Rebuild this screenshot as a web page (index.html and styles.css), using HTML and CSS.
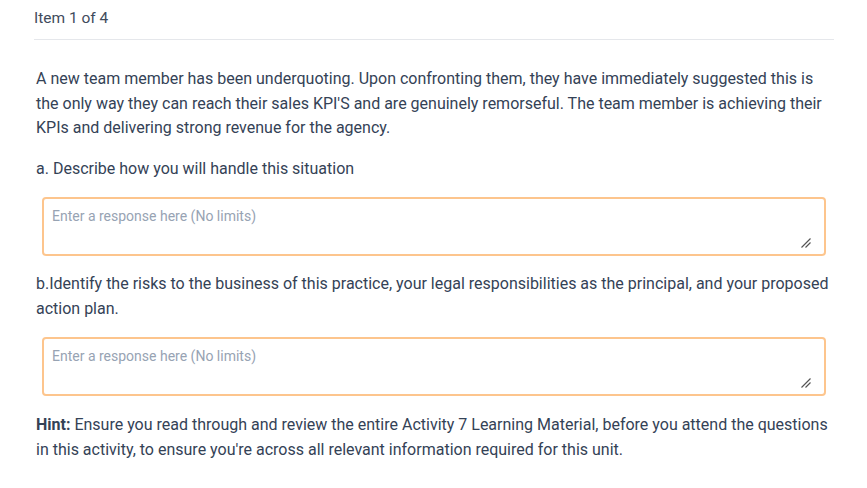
FILE: index.html
```html
<!DOCTYPE html>
<html>
<head>
<meta charset="utf-8">
<link rel="stylesheet" href="styles.css">
</head>
<body>
<div class="page">
  <div class="header">Item 1 of 4</div>
  <div class="content">
    <p class="para">A new team member has been underquoting. Upon confronting them, they have immediately suggested this is the only way they can reach their sales KPI'S and are genuinely remorseful. The team member is achieving their KPIs and delivering strong revenue for the agency.</p>
    <p class="label">a. Describe how you will handle this situation</p>
    <div class="field">
      <div class="box">
        <textarea class="response" placeholder="Enter a response here (No limits)"></textarea>
        <svg class="grip" width="10" height="10" viewBox="0 0 10 10"><path d="M9.5 0.5 L0.5 9.5 M9.5 4.5 L4.5 9.5" stroke="#555" stroke-width="1.2" fill="none"/></svg>
      </div>
    </div>
    <p class="label">b.Identify the risks to the business of this practice, your legal responsibilities as the principal, and your proposed action plan.</p>
    <div class="field">
      <div class="box">
        <textarea class="response" placeholder="Enter a response here (No limits)"></textarea>
        <svg class="grip" width="10" height="10" viewBox="0 0 10 10"><path d="M9.5 0.5 L0.5 9.5 M9.5 4.5 L4.5 9.5" stroke="#555" stroke-width="1.2" fill="none"/></svg>
      </div>
    </div>
    <p class="hint"><strong>Hint:</strong> Ensure you read through and review the entire Activity 7 Learning Material, before you attend the questions in this activity, to ensure you're across all relevant information required for this unit.</p>
  </div>
</div>
</body>
</html>
```
FILE: styles.css
```css
html, body {
  margin: 0;
  padding: 0;
  background: #ffffff;
}
body {
  font-family: Roboto, "Liberation Sans", sans-serif;
  color: #344256;
}
.page {
  width: 800px;
  padding-left: 34px;
}
.header {
  font-size: 15.5px;
  line-height: 22px;
  padding-top: 7px;
  padding-bottom: 10px;
  border-bottom: 1px solid #e5e7eb;
  color: #3f4b5c;
}
.content {
  padding: 0 0 0 2px;
}
.para, .label, .hint {
  margin: 0;
  font-size: 16px;
  line-height: 24.5px;
}
.para {
  margin-top: 27px;
}
.label {
  margin-top: 16px;
}
.hint {
  margin-top: 17px;
}
.hint strong {
  font-weight: 700;
}
.field {
  padding: 16px 0 0 6px;
}
.box {
  position: relative;
  width: 784px;
}
.response {
  display: block;
  box-sizing: border-box;
  width: 784px;
  height: 59px;
  border: 2px solid #fdc58d;
  border-radius: 4px;
  padding: 7px 8px;
  font-family: Roboto, "Liberation Sans", sans-serif;
  font-size: 14px;
  line-height: 20px;
  color: #344256;
  background: #fff;
  resize: none;
  outline: none;
}
.response::placeholder {
  color: #97a3b3;
}
.grip {
  position: absolute;
  right: 15px;
  bottom: 8px;
}
```
